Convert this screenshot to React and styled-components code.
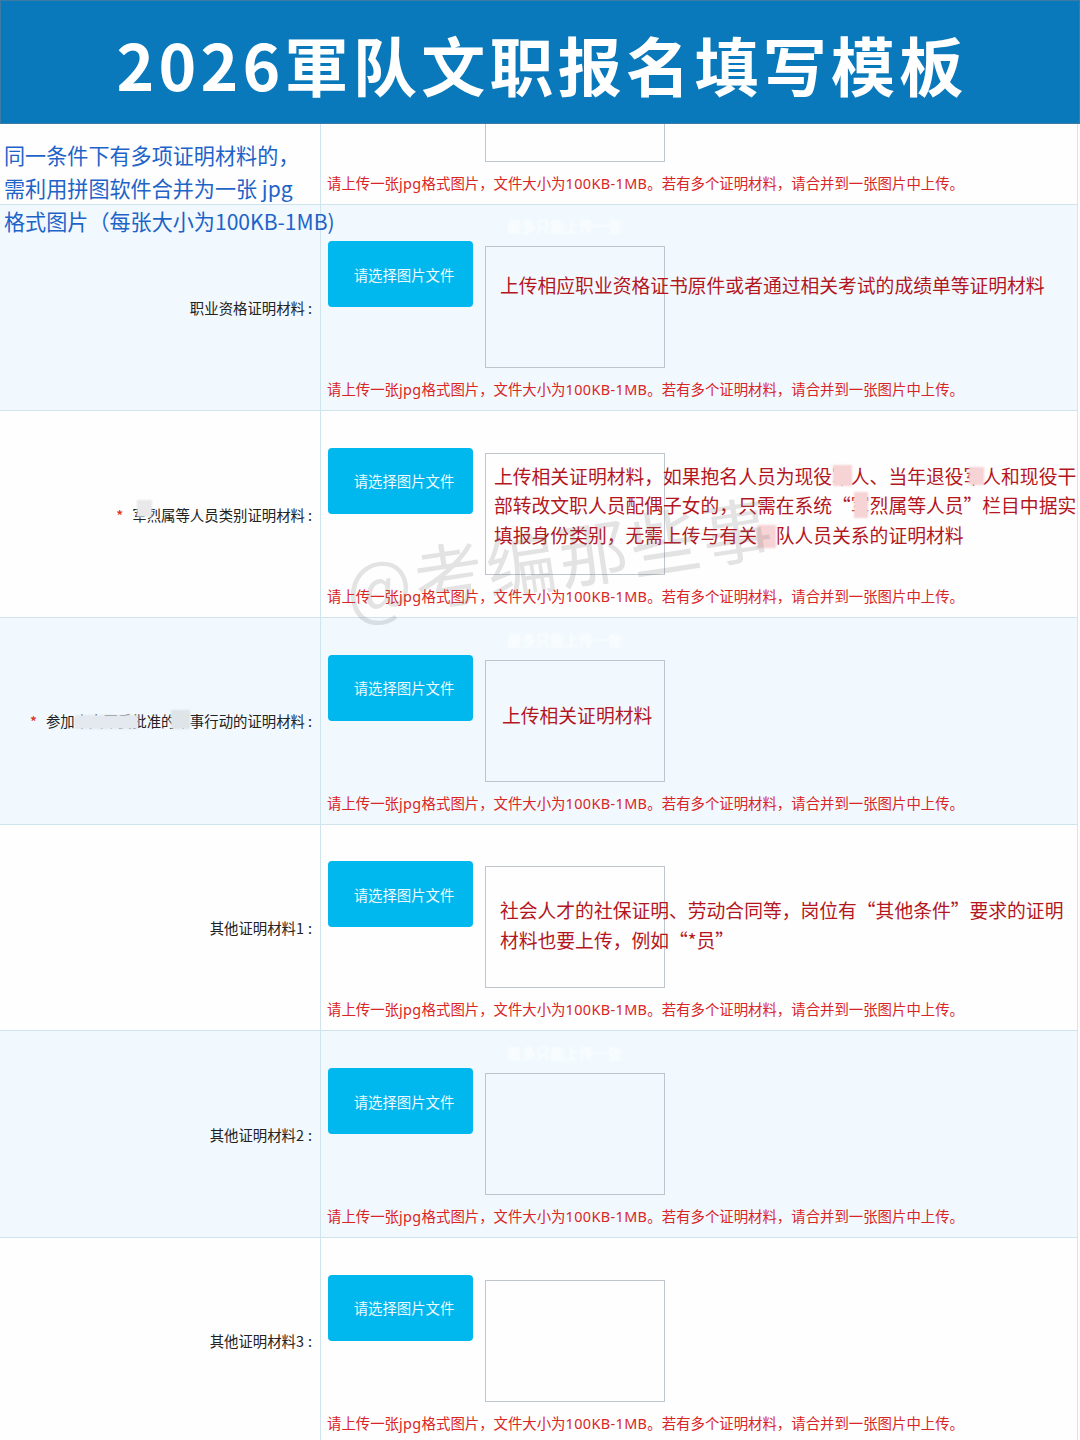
import React from 'react';
import styled, { createGlobalStyle } from 'styled-components';

const GlobalStyle = createGlobalStyle`
  body {
    margin: 0;
    background: #fefefe;
    font-family: 'Noto Sans CJK SC', sans-serif;
  }
`;

const Page = styled.div`
  position: relative;
  width: 1080px;
  height: 1440px;
  overflow: hidden;
`;

const Header = styled.header`
  display: flex;
  align-items: center;
  justify-content: center;
  box-sizing: border-box;
  height: 124px;
  padding: 2px 0 0 4px;
  border: 1px solid #3c7ba3;
  background: #0a79bb;
`;

const Title = styled.h1`
  margin: 0;
  color: #fff;
  font-size: 64px;
  font-weight: 700;
  line-height: 96px;
  letter-spacing: 4.3px;
  white-space: nowrap;
`;

const Table = styled.div`
  width: 1077px;
  border-right: 1px solid #d5e6ee;
`;

const Row = styled.div`
  display: grid;
  grid-template-columns: 320px 1fr;
  box-sizing: border-box;
  height: ${(props) => (props.$partial ? '80.6px' : '206.7px')};
  border-bottom: 1px solid #d0e4ee;
  background: ${(props) => (props.$tinted ? '#f1f9fe' : '#fefefe')};
`;

const LabelCell = styled.div`
  display: flex;
  align-items: center;
  justify-content: flex-end;
  padding: 1px 8px 0 0;
  color: #222;
  font-size: 14.4px;
  line-height: 22px;
  white-space: nowrap;
`;

const Required = styled.span`
  margin-right: 9px;
  color: #e0301e;
  font-weight: 500;
`;

const Digit = styled.span`
  letter-spacing: 1px;
`;

const Colon = styled.span`
  margin-left: 3px;
`;

const UploadCell = styled.div`
  display: flex;
  flex-direction: column;
  justify-content: flex-end;
  min-height: 0;
  padding: 0 0 8px 7px;
  border-left: 1px solid #d0e4ee;
`;

const Picker = styled.div`
  display: flex;
  align-items: flex-start;
  gap: 12px;
`;

const PickButton = styled.button`
  width: 145px;
  height: 66px;
  margin: 1px 0 60px;
  padding: 0 0 0 7px;
  border: 0;
  border-radius: 4px;
  background: #00b7ee;
  color: #eefaff;
  font-family: inherit;
  font-size: 14.4px;
`;

const Preview = styled.div`
  position: relative;
  box-sizing: border-box;
  width: 180px;
  height: ${(props) => (props.$partial ? '38px' : '122px')};
  margin-top: ${(props) => (props.$partial ? '0' : '6px')};
  margin-left: ${(props) => (props.$partial ? '157px' : '0')};
  border: 1px solid #bfc5cc;
  border-top-width: ${(props) => (props.$partial ? '0' : '1px')};
`;

/* white text, hardly visible over the tinted rows */
const Ghost = styled.span`
  position: absolute;
  left: 21px;
  top: -32px;
  color: #fff;
  font-size: 14.4px;
  line-height: 22px;
  white-space: nowrap;
  filter: blur(1px);
`;

const Note = styled.p`
  position: absolute;
  left: ${(props) => props.$left}px;
  top: ${(props) => props.$top}px;
  margin: 0;
  color: #b3161e;
  font-size: 18.8px;
  line-height: 29.3px;
  white-space: nowrap;
`;

const Hint = styled.div`
  margin: 9px 0 0 -1px;
  color: #d92525;
  font-size: 14.4px;
  line-height: 24px;
  white-space: nowrap;
`;

const Latin = styled.span`
  font-family: 'Noto Sans', sans-serif;
  letter-spacing: 0.4px;
`;

const Masked = styled.span`
  position: relative;

  &::after {
    content: '';
    position: absolute;
    left: ${(props) => props.$x}px;
    top: ${(props) => props.$y}px;
    width: ${(props) => props.$w}px;
    height: ${(props) => props.$h}px;
    background: ${(props) => props.$color};
    box-shadow: 0 0 2px 1px ${(props) => props.$color};
  }
`;

const Tip = styled.p`
  position: absolute;
  left: 4px;
  top: 139px;
  margin: 0;
  color: #1d63c8;
  font-size: 21.1px;
  line-height: 33px;
  white-space: nowrap;
`;

const Watermark = styled.div`
  position: absolute;
  left: 343px;
  top: 503px;
  color: rgba(120, 120, 120, 0.2);
  font-size: 70px;
  line-height: 104px;
  letter-spacing: 2.8px;
  white-space: nowrap;
  transform: rotate(-8.7deg);
`;

const pink = '#f6d3d5';

const rows = [
  {
    label: '职业资格证明材料',
    note: { left: 14, top: 23, body: '上传相应职业资格证书原件或者通过相关考试的成绩单等证明材料' },
  },
  {
    required: true,
    label: (
      <>
        <Masked $x={6} $y={-3} $w={13} $h={15} $color="#e9e8ea">军</Masked>
        烈属等人员类别证明材料
      </>
    ),
    note: {
      left: 8,
      top: 7,
      body: (
        <>
          上传相关证明材料，如果抱名人员为现役
          <Masked $x={2} $y={4} $w={17} $h={19} $color={pink}>军</Masked>
          人、当年退役
          <Masked $x={6} $y={6} $w={13} $h={16} $color={pink}>军</Masked>
          人和现役干<br />
          部转改文职人员配偶子女的，只需在系统“
          <Masked $x={4} $y={2} $w={12} $h={24} $color={pink}>军</Masked>
          烈属等人员”栏目中据实<br />
          填报身份类别，无需上传与有关
          <Masked $x={1} $y={5} $w={17} $h={21} $color={pink}>军</Masked>
          队人员关系的证明材料
        </>
      ),
    },
  },
  {
    required: true,
    label: (
      <>
        参加
        <Masked $x={1} $y={6} $w={61} $h={12} $color="#e3e9ee">中央军委</Masked>
        批准的
        <Masked $x={-3} $y={1} $w={17} $h={17} $color="#dfe4e9">军</Masked>
        事行动的证明材料
      </>
    ),
    note: { left: 16, top: 39, body: '上传相关证明材料' },
  },
  {
    label: '其他证明材料',
    number: 1,
    note: {
      left: 14,
      top: 28,
      body: (
        <>
          社会人才的社保证明、劳动合同等，岗位有“其他条件”要求的证明<br />
          材料也要上传，例如“*员”
        </>
      ),
    },
  },
  { label: '其他证明材料', number: 2 },
  { label: '其他证明材料', number: 3 },
];

const UploadHint = () => (
  <Hint>
    请上传一张<Latin>jpg</Latin>格式图片，文件大小为<Latin>100KB-1MB</Latin>
    。若有多个证明材料，请合并到一张图片中上传。
  </Hint>
);

const UploadRow = ({ row, tinted }) => (
  <Row $tinted={tinted}>
    <LabelCell>
      {row.required && <Required>*</Required>}
      <span>
        {row.label}
        {row.number && <Digit>{row.number}</Digit>}
        <Colon>:</Colon>
      </span>
    </LabelCell>
    <UploadCell>
      <Picker>
        <PickButton type="button">请选择图片文件</PickButton>
        <Preview>
          {tinted && <Ghost>最多只能上传一张</Ghost>}
          {row.note && (
            <Note $left={row.note.left} $top={row.note.top}>{row.note.body}</Note>
          )}
        </Preview>
      </Picker>
      <UploadHint />
    </UploadCell>
  </Row>
);

const App = () => {
  return (
    <Page lang="zh-CN">
      <GlobalStyle />
      <Header>
        <Title>2026軍队文职报名填写模板</Title>
      </Header>
      <Table>
        <Row $partial>
          <LabelCell />
          <UploadCell>
            <Preview $partial />
            <UploadHint />
          </UploadCell>
        </Row>
        {rows.map((row, index) => (
          <UploadRow key={index} row={row} tinted={index % 2 === 0} />
        ))}
      </Table>
      <Tip>
        同一条件下有多项证明材料的，<br />
        需利用拼图软件合并为一张 jpg<br />
        格式图片（每张大小为100KB-1MB)
      </Tip>
      <Watermark>@考编那些事</Watermark>
    </Page>
  );
};

export default App;
